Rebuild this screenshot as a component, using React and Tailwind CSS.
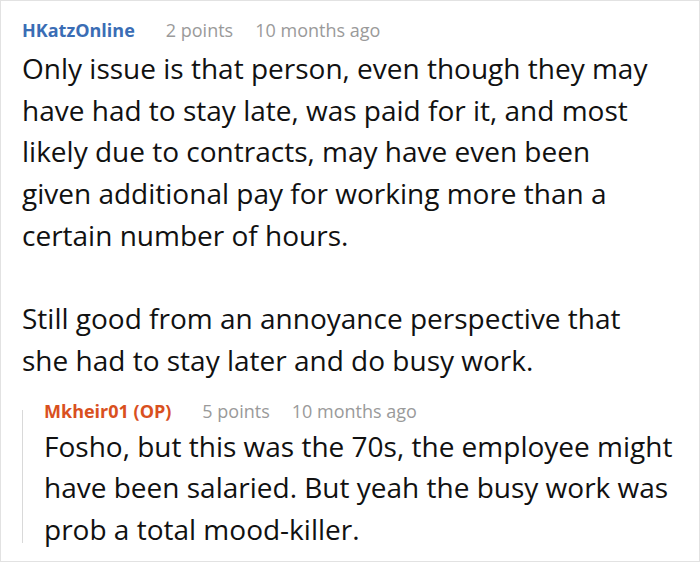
import React from "react";

const Meta = ({ name, nameColor, points, time }) => (
  <div className="flex items-baseline text-[18px] leading-[24px]">
    <span className={`font-bold ${nameColor}`}>{name}</span>
    <span className="ml-[31px] text-[#9a9a9a]">{points}</span>
    <span className="ml-[22px] text-[#9a9a9a]">{time}</span>
  </div>
);

const App = () => {
  return (
    <div
      className="w-[700px] h-[562px] bg-white border border-[#e2e2e2] overflow-hidden text-[#111]"
      style={{ fontFamily: '"Open Sans", "Noto Sans", sans-serif' }}
    >
      <div className="pl-[21px] pt-[17px] w-[656px]">
        <Meta name="HKatzOnline" nameColor="text-[#3a6db5]" points="2 points" time="10 months ago" />
        <div className="mt-[6px] text-[28px] leading-[41.7px]">
          <p>
            Only issue is that person, even though they may have had to stay late, was paid for it, and most
            likely due to contracts, may have even been given additional pay for working more than a certain
            number of hours.
          </p>
          <p className="mt-[41.7px]">
            Still good from an annoyance perspective that she had to stay later and do busy work.
          </p>
        </div>
      </div>
      <div className="ml-[21px] mt-[17px] flex">
        <div className="w-px h-[133px] mt-[11px] bg-[#d9d9d9] shrink-0" />
        <div className="pl-[21px]">
          <Meta name="Mkheir01 (OP)" nameColor="text-[#d9501e]" points="5 points" time="10 months ago" />
          <p className="mt-[3px] text-[28px] leading-[41.7px]">
            Fosho, but this was the 70s, the employee might have been salaried. But yeah the busy work was prob a
            total mood-killer.
          </p>
        </div>
      </div>
    </div>
  );
};

export default App;
